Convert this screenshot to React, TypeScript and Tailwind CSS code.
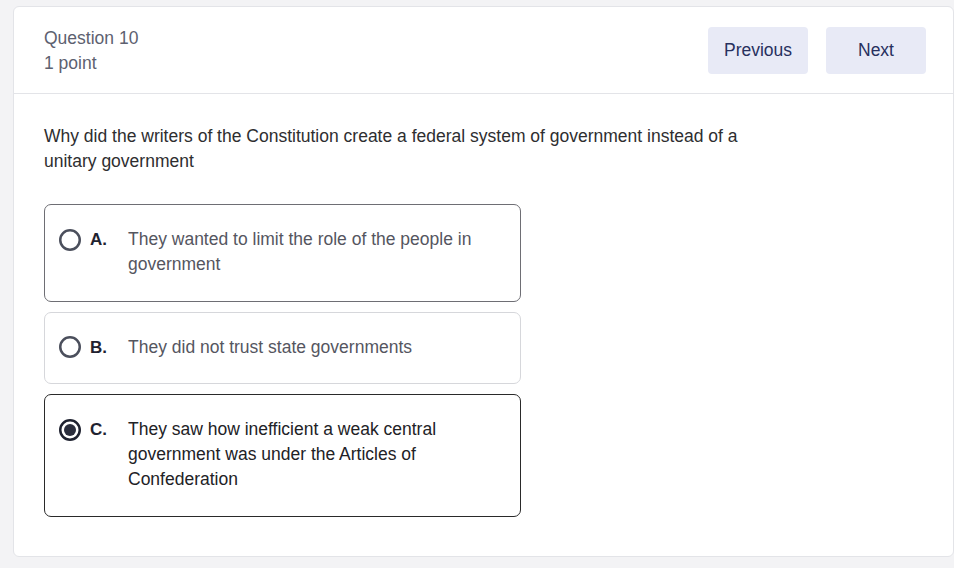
import React from "react";

const options = [
  { letter: "A.", text: "They wanted to limit the role of the people in government", state: "hover" },
  { letter: "B.", text: "They did not trust state governments", state: "normal" },
  { letter: "C.", text: "They saw how inefficient a weak central government was under the Articles of Confederation", state: "selected" },
];

function Radio({ checked }: { checked: boolean }) {
  return (
    <svg width="22" height="22" viewBox="0 0 22 22" className="shrink-0">
      <circle cx="11" cy="11" r="9.75" fill="white" stroke={checked ? "#1f2230" : "#4b4f5c"} strokeWidth="2.5" />
      {checked && <circle cx="11" cy="11" r="6" fill="#2b2e3d" />}
    </svg>
  );
}

export default function App() {
  return (
    <div className="min-h-[568px] bg-[#f3f3f5] pt-[6px] pl-[13px] font-['Liberation_Sans',Arial,sans-serif]">
      <div className="w-[941px] h-[551px] bg-white border border-[#e3e4e8] rounded-[6px]">
        <div className="flex items-center justify-between pl-[30px] pr-[27px] py-[17px] border-b border-[#e3e4e8]">
          <div className="pt-[2px] text-[17.5px] leading-[25px] text-[#5d6170]">
            <div>Question 10</div>
            <div>1 point</div>
          </div>
          <div className="flex gap-[18px]">
            <button className="w-[100px] h-[47px] rounded-[4px] bg-[#e8eaf6] text-[#27305e] text-[17.5px]">Previous</button>
            <button className="w-[100px] h-[47px] rounded-[4px] bg-[#e8eaf6] text-[#27305e] text-[17.5px]">Next</button>
          </div>
        </div>
        <div className="px-[30px] pt-[30px]">
          <p className="w-[720px] text-[17.5px] leading-[25px] text-[#2e2e30]">
            Why did the writers of the Constitution create a federal system of government instead of a unitary government
          </p>
          <div className="mt-[30px] flex flex-col gap-[10px] w-[477px]">
            {options.map((o) => (
              <div
                key={o.letter}
                className={
                  "flex items-start pl-[14px] pr-[30px] pt-[22px] pb-[23.5px] rounded-[7px] border " +
                  (o.state === "selected"
                    ? "border-[#2a2a2a]"
                    : o.state === "hover"
                    ? "border-[#6e6e74]"
                    : "border-[#d6d7db]")
                }
              >
                <div className="h-[25px] flex items-center">
                  <Radio checked={o.state === "selected"} />
                </div>
                <div className="ml-[9px] w-[38px] shrink-0 text-[17px] leading-[25px] font-bold text-[#1f2230]">{o.letter}</div>
                <div
                  className={
                    "text-[17.5px] leading-[25px] " + (o.state === "selected" ? "text-[#222226]" : "text-[#55565f]")
                  }
                >
                  {o.text}
                </div>
              </div>
            ))}
          </div>
        </div>
      </div>
    </div>
  );
}
